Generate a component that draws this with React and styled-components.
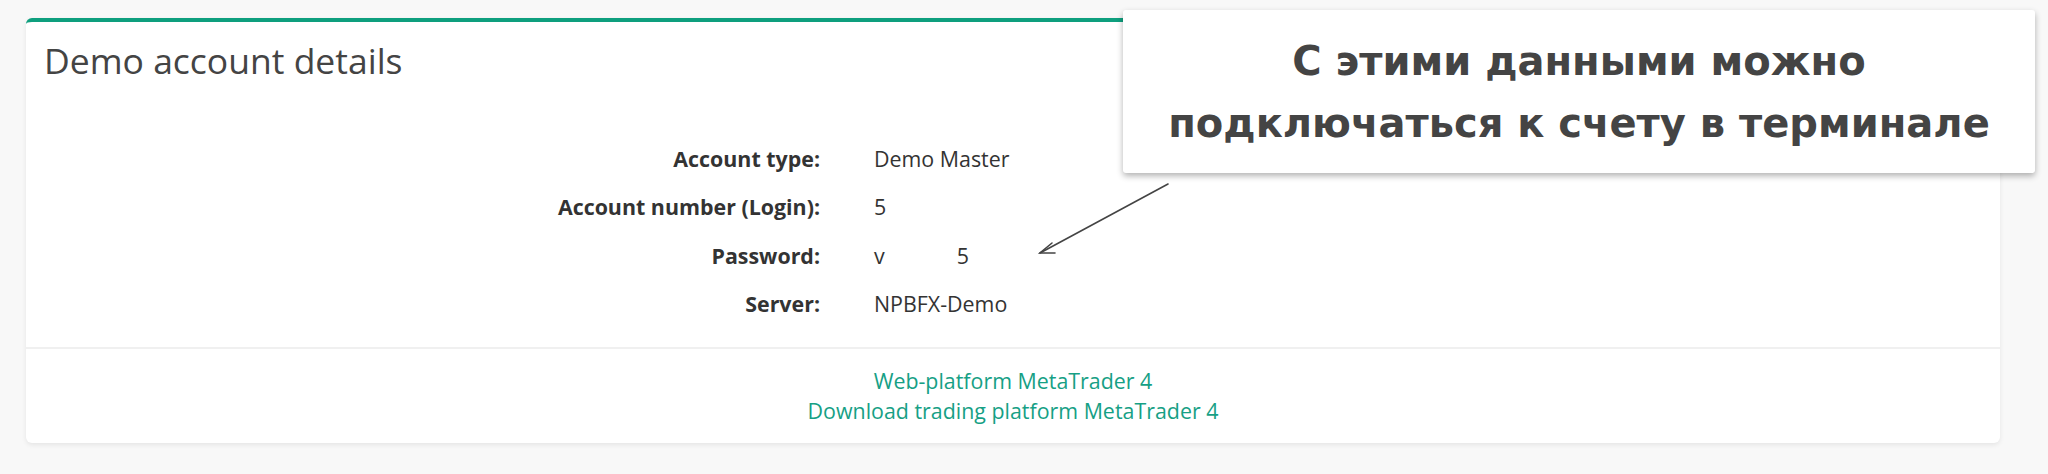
import React from 'react';
import styled, { createGlobalStyle } from 'styled-components';

const GlobalStyle = createGlobalStyle`
  html, body {
    margin: 0;
    padding: 0;
    background: #f8f8f8;
  }
  body {
    font-family: "Open Sans", "Noto Sans", sans-serif;
    color: #333;
  }
`;

const Page = styled.div`
  position: relative;
  width: 2048px;
  height: 474px;
  box-sizing: border-box;
  padding: 18px 48px 0 26px;
  overflow: hidden;
`;

const Card = styled.div`
  background: #fff;
  border-top: 4px solid #0e9f7e;
  border-radius: 6px;
  box-shadow: 0 2px 5px rgba(0, 0, 0, 0.08);
  height: 421px;
  box-sizing: content-box;
`;

const Header = styled.div`
  padding: 16px 18px;
`;

const Title = styled.h2`
  margin: 0;
  font-size: 35.5px;
  line-height: 44px;
  font-weight: 400;
  color: #444;
`;

const Details = styled.div`
  display: grid;
  grid-template-columns: 794px 1fr;
  grid-auto-rows: 48.5px;
  align-items: center;
  padding: 36px 0 19px;
`;

const Label = styled.div`
  font-size: 21.4px;
  font-weight: 700;
  text-align: right;
  color: #333;
`;

const Value = styled.div`
  font-size: 21.4px;
  padding-left: 54px;
  color: #333;
`;

const Hidden = styled.span`
  display: inline-block;
  width: ${(p) => p.$w}px;
`;

const Footer = styled.div`
  border-top: 2px solid #f0f0f0;
  padding: 17px 0 18px;
  display: flex;
  flex-direction: column;
  align-items: center;
`;

const PlatformLink = styled.a`
  font-size: 21.4px;
  line-height: 30px;
  color: #16a085;
  text-decoration: none;
`;

const Callout = styled.div`
  position: absolute;
  left: 1123px;
  top: 10px;
  width: 912px;
  height: 163px;
  box-sizing: border-box;
  background: #fff;
  border-radius: 3px;
  box-shadow: 0 3px 6px rgba(0, 0, 0, 0.3);
  display: flex;
  flex-direction: column;
  justify-content: center;
  align-items: center;
  font-family: "DejaVu Sans", "Open Sans", sans-serif;
  font-weight: 700;
  font-size: 40px;
  line-height: 62px;
  color: #444;
`;

const Arrow = styled.svg`
  position: absolute;
  left: 1030px;
  top: 175px;
`;

export default function App() {
  const rows = [
    ['Account type:', 'Demo Master'],
    ['Account number (Login):', '5'],
    ['Password:', <>v<Hidden $w={72} />5</>],
    ['Server:', 'NPBFX-Demo'],
  ];

  return (
    <Page>
      <GlobalStyle />
      <Card>
        <Header>
          <Title>Demo account details</Title>
        </Header>
        <Details>
          {rows.map(([label, value], i) => (
            <React.Fragment key={`row-${i}`}>
              <Label>{label}</Label>
              <Value>{value}</Value>
            </React.Fragment>
          ))}
        </Details>
        <Footer>
          <PlatformLink href="#">Web-platform MetaTrader 4</PlatformLink>
          <PlatformLink href="#">Download trading platform MetaTrader 4</PlatformLink>
        </Footer>
      </Card>
      <Callout>
        <div>С этими данными можно</div>
        <div>подключаться к счету в терминале</div>
      </Callout>
      <Arrow width="150" height="90" viewBox="0 0 150 90">
        <g stroke="#444" strokeWidth="1.6" fill="none" strokeLinecap="round">
          <line x1="138" y1="9" x2="10" y2="78" />
          <polyline points="22,68 10,78 25,78" />
        </g>
      </Arrow>
    </Page>
  );
}
